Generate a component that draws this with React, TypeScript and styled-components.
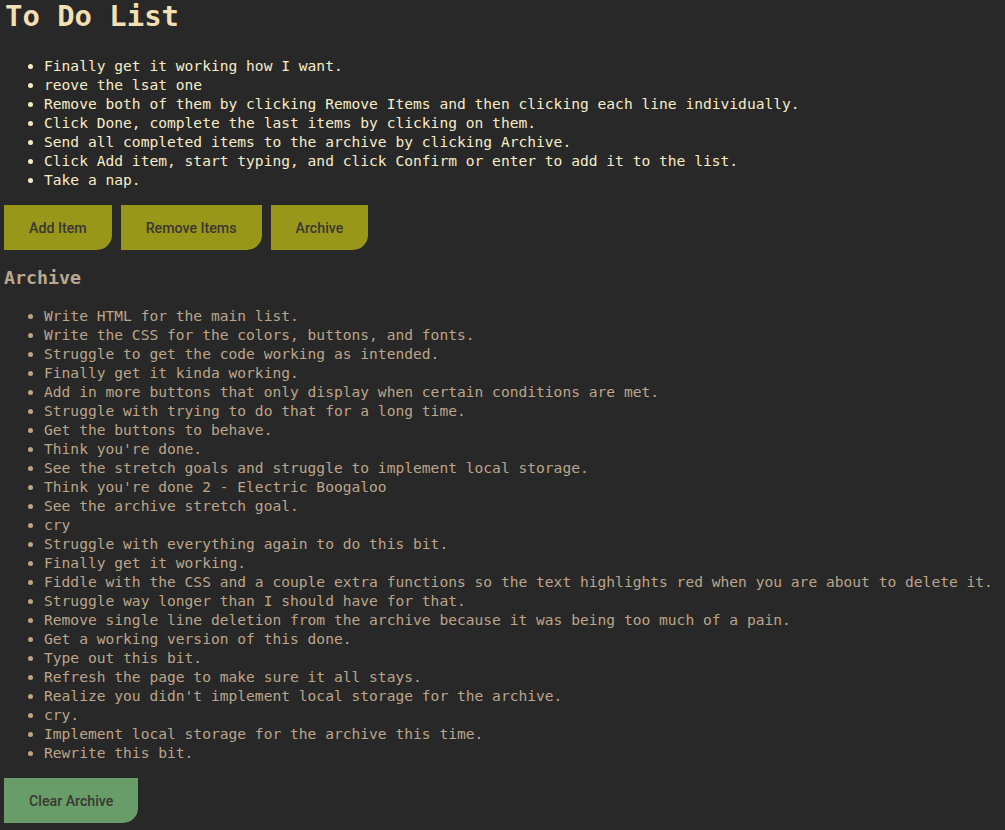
import React from "react";
import styled, { createGlobalStyle } from "styled-components";

const GlobalStyle = createGlobalStyle`
  html, body {
    margin: 0;
    padding: 0;
    background: #282828;
  }
  body {
    font-family: "DejaVu Sans Mono", "Liberation Mono", monospace;
  }
`;

const Page = styled.div`
  padding: 0 4px 8px;
  min-height: 830px;
  box-sizing: border-box;
  background: #282828;
`;

const Title = styled.h1`
  margin: 0;
  font-size: 28.9px;
  line-height: 32px;
  font-weight: bold;
  color: #f2dfb2;
  padding-left: 1px;
`;

const List = styled.ul<{ $muted?: boolean }>`
  margin: ${(p) => (p.$muted ? "17px" : "24px")} 0 0;
  padding-left: 40px;
  list-style: disc;
  font-size: 14.6px;
  line-height: 19px;
  color: ${(p) => (p.$muted ? "#bca58a" : "#f7ecc8")};
`;

const Item = styled.li`
  white-space: nowrap;
  padding-bottom: 0;
`;

const ButtonRow = styled.div<{ $top?: number }>`
  display: flex;
  gap: 9px;
  margin-top: ${(p) => p.$top ?? 16}px;
`;

const Button = styled.button<{ $variant?: "green" }>`
  height: 45px;
  padding: 0 25px;
  border: none;
  border-radius: 0 0 15px 0;
  background: ${(p) => (p.$variant === "green" ? "#689d6a" : "#98971a")};
  color: #3a3733;
  font-family: Roboto, "Liberation Sans", sans-serif;
  font-weight: 500;
  font-size: 14.2px;
  cursor: pointer;
`;

const SubTitle = styled.h2`
  margin: 17px 0 0;
  font-size: 18.3px;
  line-height: 22px;
  font-weight: bold;
  color: #b9a88e;
`;

const todos = [
  "Finally get it working how I want.",
  "reove the lsat one",
  "Remove both of them by clicking Remove Items and then clicking each line individually.",
  "Click Done, complete the last items by clicking on them.",
  "Send all completed items to the archive by clicking Archive.",
  "Click Add item, start typing, and click Confirm or enter to add it to the list.",
  "Take a nap.",
];

const archive = [
  "Write HTML for the main list.",
  "Write the CSS for the colors, buttons, and fonts.",
  "Struggle to get the code working as intended.",
  "Finally get it kinda working.",
  "Add in more buttons that only display when certain conditions are met.",
  "Struggle with trying to do that for a long time.",
  "Get the buttons to behave.",
  "Think you're done.",
  "See the stretch goals and struggle to implement local storage.",
  "Think you're done 2 - Electric Boogaloo",
  "See the archive stretch goal.",
  "cry",
  "Struggle with everything again to do this bit.",
  "Finally get it working.",
  "Fiddle with the CSS and a couple extra functions so the text highlights red when you are about to delete it.",
  "Struggle way longer than I should have for that.",
  "Remove single line deletion from the archive because it was being too much of a pain.",
  "Get a working version of this done.",
  "Type out this bit.",
  "Refresh the page to make sure it all stays.",
  "Realize you didn't implement local storage for the archive.",
  "cry.",
  "Implement local storage for the archive this time.",
  "Rewrite this bit.",
];

export default function App() {
  return (
    <>
      <GlobalStyle />
      <Page>
        <Title>To Do List</Title>
        <List>
          {todos.map((t, i) => (
            <Item key={i}>{t}</Item>
          ))}
        </List>
        <ButtonRow>
          <Button>Add Item</Button>
          <Button>Remove Items</Button>
          <Button>Archive</Button>
        </ButtonRow>
        <SubTitle>Archive</SubTitle>
        <List $muted>
          {archive.map((t, i) => (
            <Item key={i}>{t}</Item>
          ))}
        </List>
        <ButtonRow $top={16}>
          <Button $variant="green">Clear Archive</Button>
        </ButtonRow>
      </Page>
    </>
  );
}
